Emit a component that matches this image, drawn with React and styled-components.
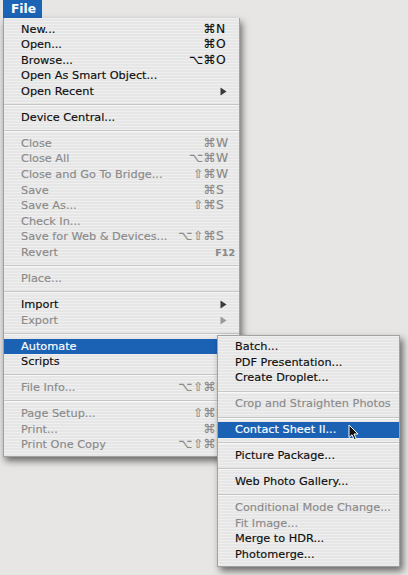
import React from 'react';
import styled, { createGlobalStyle } from 'styled-components';

const GlobalStyle = createGlobalStyle`
  html, body {
    margin: 0;
    padding: 0;
    background: #e7e6e4;
  }
`;

const fileMenu = [
  { label: 'New...', mods: '⌘', key: 'N' },
  { label: 'Open...', mods: '⌘', key: 'O' },
  { label: 'Browse...', mods: '⌥⌘', key: 'O' },
  { label: 'Open As Smart Object...' },
  { label: 'Open Recent', arrow: true },
  { sep: true },
  { label: 'Device Central...' },
  { sep: true },
  { label: 'Close', mods: '⌘', key: 'W', off: true },
  { label: 'Close All', mods: '⌥⌘', key: 'W', off: true },
  { label: 'Close and Go To Bridge...', mods: '⇧⌘', key: 'W', off: true },
  { label: 'Save', mods: '⌘', key: 'S', off: true },
  { label: 'Save As...', mods: '⇧⌘', key: 'S', off: true },
  { label: 'Check In...', off: true },
  { label: 'Save for Web & Devices...', mods: '⌥⇧⌘', key: 'S', off: true },
  { label: 'Revert', fkey: 'F12', off: true },
  { sep: true },
  { label: 'Place...', off: true },
  { sep: true },
  { label: 'Import', arrow: true },
  { label: 'Export', arrow: true, off: true },
  { sep: true },
  { label: 'Automate', active: true, sub: true },
  { label: 'Scripts' },
  { sep: true },
  { label: 'File Info...', mods: '⌥⇧⌘', key: 'I', off: true },
  { sep: true },
  { label: 'Page Setup...', mods: '⇧⌘', key: 'P', off: true },
  { label: 'Print...', mods: '⌘', key: 'P', off: true },
  { label: 'Print One Copy', mods: '⌥⇧⌘', key: 'P', off: true },
];

const automateMenu = [
  { label: 'Batch...' },
  { label: 'PDF Presentation...' },
  { label: 'Create Droplet...' },
  { sep: true },
  { label: 'Crop and Straighten Photos', off: true },
  { sep: true },
  { label: 'Contact Sheet II...', active: true, cursor: true },
  { sep: true },
  { label: 'Picture Package...' },
  { sep: true },
  { label: 'Web Photo Gallery...' },
  { sep: true },
  { label: 'Conditional Mode Change...', off: true },
  { label: 'Fit Image...', off: true },
  { label: 'Merge to HDR...' },
  { label: 'Photomerge...' },
];

const Arrow = ({ off }) => (
  <svg width="7" height="9" viewBox="0 0 7 9">
    <path d="M0.5 0.5 L6.5 4.5 L0.5 8.5 Z" fill={off ? '#9a9a9a' : '#3a3a3a'} />
  </svg>
);

const Cursor = () => (
  <svg width="12" height="17" viewBox="0 0 12 17">
    <path
      d="M1 1 L1 13.5 L4 10.8 L6.2 15.6 L8.2 14.7 L6 10 L10 10 Z"
      fill="#111"
      stroke="#fff"
      strokeWidth="1"
      strokeLinejoin="round"
    />
  </svg>
);

function MenuList({ items, renderSub }) {
  return items.map((it, i) => {
    if (it.sep) return <Separator key={i} />;
    return (
      <Item key={i} $active={it.active} $off={it.off}>
        <Label>{it.label}</Label>
        {it.mods && (
          <Shortcut>
            <Mods>{it.mods}</Mods>
            <Key>{it.key}</Key>
          </Shortcut>
        )}
        {it.fkey && <FKey>{it.fkey}</FKey>}
        {it.arrow && (
          <ArrowBox>
            <Arrow off={it.off} />
          </ArrowBox>
        )}
        {it.cursor && (
          <CursorBox>
            <Cursor />
          </CursorBox>
        )}
        {it.sub && renderSub && renderSub()}
      </Item>
    );
  });
}

export default function App() {
  return (
    <>
      <GlobalStyle />
      <Page>
        <MenuBar>
          <Title>File</Title>
        </MenuBar>
        <Panel $width={237}>
          <MenuList
            items={fileMenu}
            renderSub={() => (
              <SubPanel>
                <MenuList items={automateMenu} />
              </SubPanel>
            )}
          />
        </Panel>
      </Page>
    </>
  );
}

const Page = styled.div`
  width: 408px;
  height: 575px;
  padding-left: 3px;
  box-sizing: border-box;
  background: #e7e6e4;
  font-family: "DejaVu Sans", Verdana, sans-serif;
  overflow: hidden;
`;

const MenuBar = styled.div`
  height: 18px;
  display: flex;
`;

const Title = styled.div`
  width: 39px;
  height: 18px;
  box-sizing: border-box;
  padding-left: 8px;
  background: #1c64b6;
  color: #fff;
  font-weight: bold;
  font-size: 12.2px;
  line-height: 19px;
`;

const stripes = `
  repeating-linear-gradient(
    to bottom,
    #efefef 0px,
    #efefef 1.5px,
    #e6e6e6 1.5px,
    #e6e6e6 3px
  )
`;

const Panel = styled.div`
  width: ${(p) => p.$width}px;
  box-sizing: border-box;
  padding: 3.5px 0;
  background: ${stripes};
  border: 1px solid #a2a2a2;
  border-top: none;
  box-shadow: 2px 4px 7px rgba(0, 0, 0, 0.55);
  position: relative;
`;

const SubPanel = styled.div`
  position: absolute;
  left: 213px;
  top: -4px;
  width: 183px;
  box-sizing: border-box;
  padding: 3.5px 0;
  background: ${stripes};
  border: 1px solid #a2a2a2;
  box-shadow: 3px 4px 7px rgba(0, 0, 0, 0.55);
  z-index: 2;
`;

const Item = styled.div`
  position: relative;
  height: 15.6px;
  display: flex;
  align-items: center;
  padding: 0 12px 0 17px;
  font-size: 11.3px;
  color: ${(p) => (p.$active ? '#fff' : p.$off ? '#8a8a8a' : '#0e0e0e')};
  background: ${(p) => (p.$active ? '#1b62b5' : 'transparent')};
  white-space: nowrap;
  -webkit-text-stroke: 0.15px currentColor;
`;

const Label = styled.span`
  flex: 1;
  line-height: 15.6px;
`;

const Shortcut = styled.span`
  display: flex;
  align-items: center;
  font-size: 12.3px;
  line-height: 15.6px;
`;

const Mods = styled.span`
  letter-spacing: 0.3px;
`;

const Key = styled.span`
  width: 11px;
  text-align: left;
`;

const FKey = styled.span`
  font-size: 9.5px;
  font-weight: bold;
  margin-right: -8px;
`;

const ArrowBox = styled.span`
  display: flex;
  align-items: center;
`;

const CursorBox = styled.span`
  position: absolute;
  left: 130px;
  top: 2px;
  display: flex;
`;

const Separator = styled.div`
  height: 10.4px;
  display: flex;
  align-items: center;

  &::before {
    content: '';
    flex: 1;
    height: 1px;
    background: #c6c6c6;
    box-shadow: 0 1px 0 #f8f8f8;
  }
`;
